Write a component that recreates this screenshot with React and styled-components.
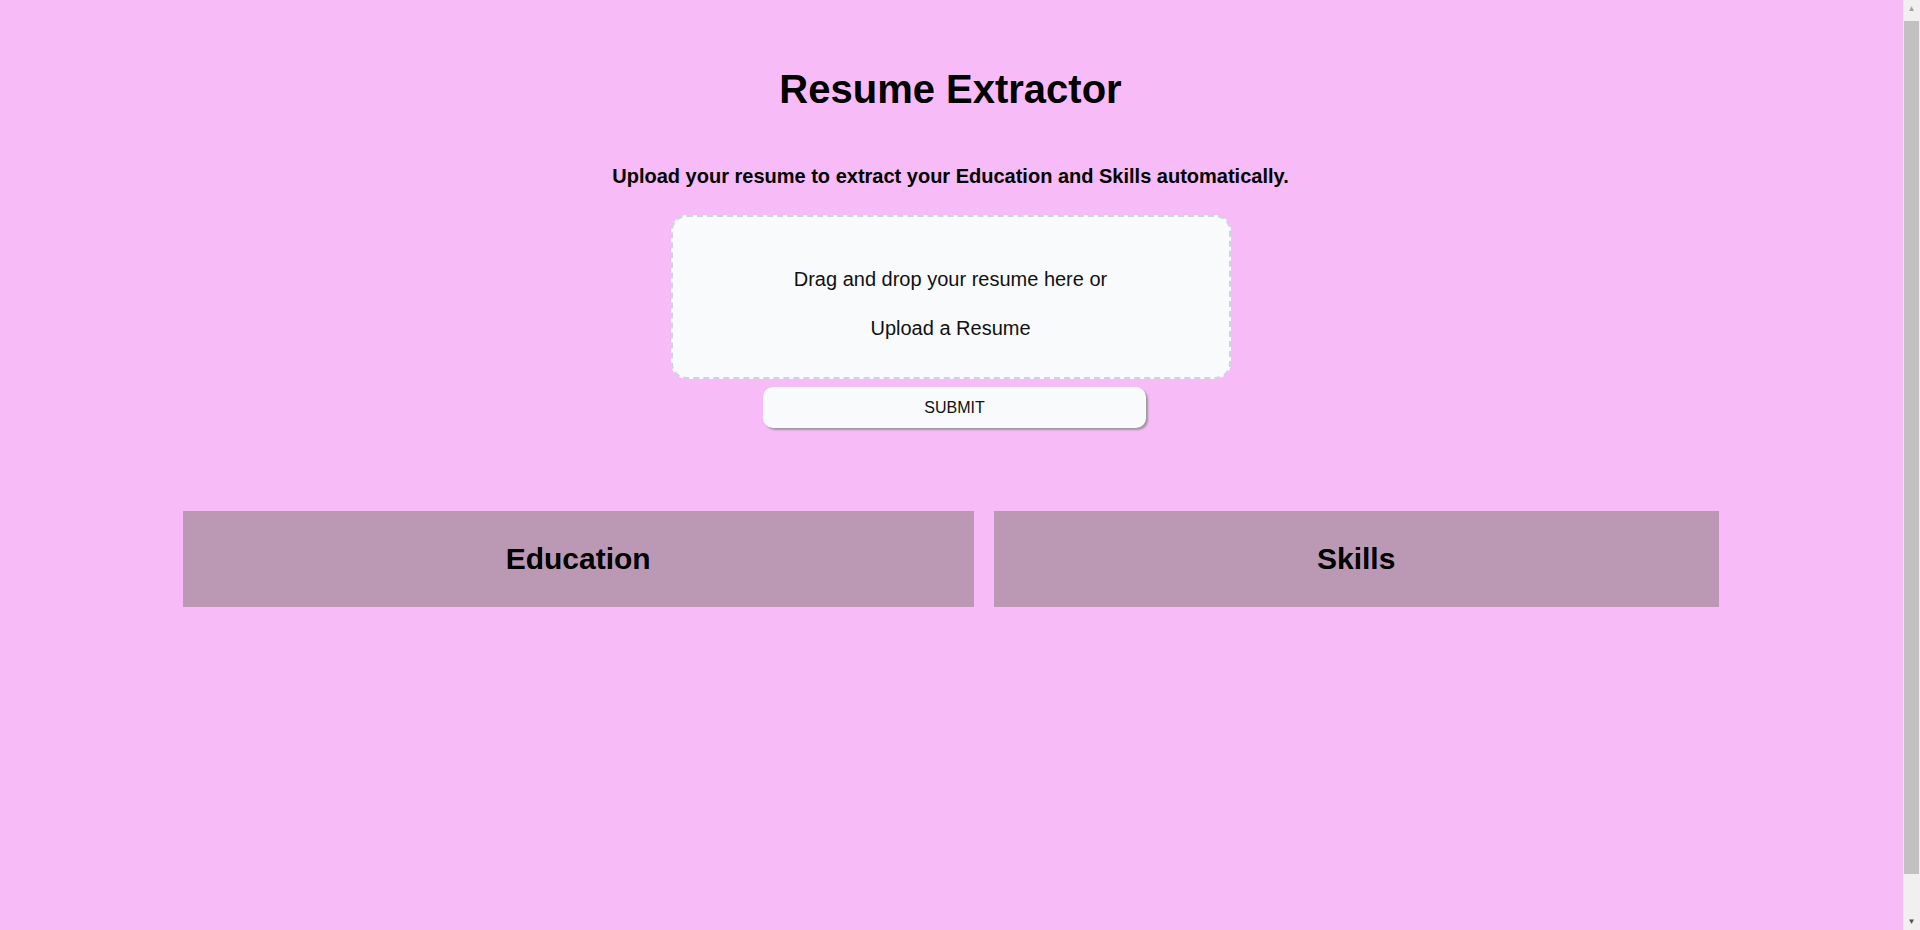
import React from 'react';
import styled, { createGlobalStyle } from 'styled-components';

const GlobalStyle = createGlobalStyle`
  body {
    margin: 0;
    font-family: "Liberation Sans", Arial, sans-serif;
    background: #f7bbf8;
    color: #000;
  }
`;

const Page = styled.div`
  min-height: 100vh;
  padding: 24px 19px 24px 0;
  display: flex;
  flex-direction: column;
  align-items: center;
`;

/* classic scrollbar gutter, as the page is a little taller than the window */
const ScrollGutter = styled.div`
  position: fixed;
  top: 0;
  right: 0;
  width: 17px;
  height: 100vh;
  background: #f0f0f0;
  display: flex;
  flex-direction: column;
  align-items: center;
`;

const ScrollArrow = styled.div`
  height: 17px;
  display: flex;
  align-items: center;
  justify-content: center;
  color: ${({ $dark }) => ($dark ? '#505050' : '#a3a3a3')};
  font-size: 8px;
`;

const ScrollThumb = styled.div`
  width: 15px;
  height: 853px;
  margin-top: 4px;
  background: #c1c1c1;
`;

const Title = styled.h1`
  margin: 42px 0 0;
  font-size: 40px;
  line-height: 46px;
  font-weight: 700;
`;

const Subtitle = styled.p`
  margin: 53px 0 0;
  font-size: 20px;
  line-height: 23px;
  font-weight: 700;
`;

const DropZone = styled.div`
  margin-top: 27px;
  box-sizing: border-box;
  width: 560px;
  height: 164px;
  padding-top: 51px;
  display: flex;
  flex-direction: column;
  align-items: center;
  gap: 26px;
  background: #f8fafc;
  border: 2px dashed #cbd5e1;
  border-radius: 16px;
  color: #111;
`;

const DropText = styled.span`
  font-size: 20px;
  line-height: 23px;
`;

const SubmitButton = styled.button`
  margin: 8px 0 0 8px;
  width: 383px;
  height: 41px;
  border: none;
  border-radius: 10px;
  background: #f8fafc;
  box-shadow: 2px 2px 2px #9a9a9a;
  font-family: inherit;
  font-size: 16px;
  color: #111;
  cursor: pointer;
`;

const Results = styled.div`
  margin-top: 83px;
  width: 1536px;
  display: flex;
  gap: 20px;
`;

const Card = styled.section`
  flex: 1 1 auto;
  height: 96px;
  display: flex;
  align-items: center;
  justify-content: center;
  background: #bb99b4;
`;

const CardTitle = styled.h2`
  margin: 0;
  font-size: 30px;
  font-weight: 700;
`;

export default function App() {
  return (
    <>
      <GlobalStyle />
      <Page>
        <Title>Resume Extractor</Title>
        <Subtitle>Upload your resume to extract your Education and Skills automatically.</Subtitle>
        <DropZone>
          <DropText>Drag and drop your resume here or</DropText>
          <DropText>Upload a Resume</DropText>
        </DropZone>
        <SubmitButton>SUBMIT</SubmitButton>
        <Results>
          <Card>
            <CardTitle>Education</CardTitle>
          </Card>
          <Card>
            <CardTitle>Skills</CardTitle>
          </Card>
        </Results>
      </Page>
      <ScrollGutter>
        <ScrollArrow>▲</ScrollArrow>
        <ScrollThumb />
        <ScrollArrow $dark style={{ marginTop: 'auto' }}>▼</ScrollArrow>
      </ScrollGutter>
    </>
  );
}
